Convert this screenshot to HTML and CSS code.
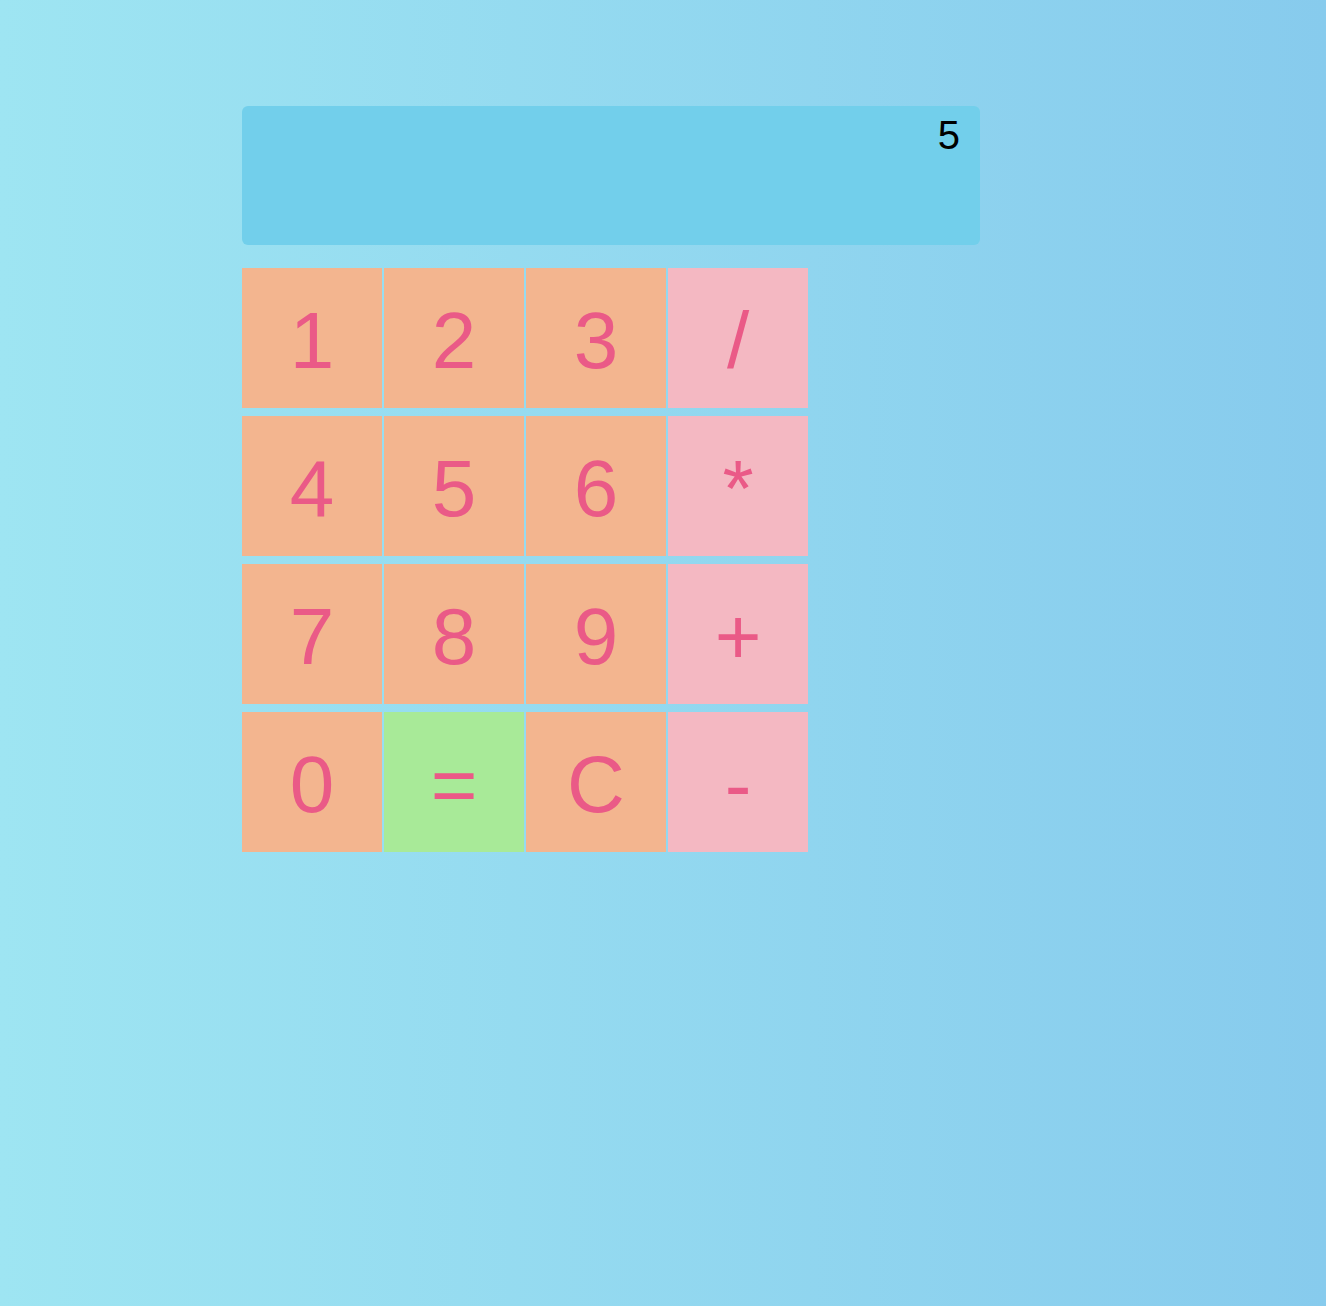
FILE: index.html
```html
<!DOCTYPE html>
<html>
<head>
<meta charset="utf-8">
<link rel="stylesheet" href="styles.css">
</head>
<body>
<div class="calc">
  <div class="display">5</div>
  <div class="keys">
    <button class="key num">1</button>
    <button class="key num">2</button>
    <button class="key num">3</button>
    <button class="key op">/</button>
    <button class="key num">4</button>
    <button class="key num">5</button>
    <button class="key num">6</button>
    <button class="key op star">*</button>
    <button class="key num">7</button>
    <button class="key num">8</button>
    <button class="key num">9</button>
    <button class="key op">+</button>
    <button class="key num">0</button>
    <button class="key eq">=</button>
    <button class="key num">C</button>
    <button class="key op">-</button>
  </div>
</div>
</body>
</html>
```
FILE: styles.css
```css
html, body {
  margin: 0;
  height: 100%;
}
body {
  background: linear-gradient(to right, #9ee5f2, #87cbed);
  font-family: "Liberation Sans", Arial, sans-serif;
}
.calc {
  padding: 106px 0 0 242px;
  width: 738px;
}
.display {
  height: 139px;
  background: #72cfeb;
  border-radius: 6px;
  text-align: right;
  box-sizing: border-box;
  padding: 9px 20px 0 0;
  font-size: 40px;
  line-height: 1;
  color: #000;
}
.keys {
  margin-top: 23px;
  display: grid;
  grid-template-columns: repeat(4, 140px);
  column-gap: 2px;
  row-gap: 8px;
}
.key {
  width: 140px;
  height: 140px;
  border: 0;
  margin: 0;
  padding: 6px 0 0 0;
  font-family: "Liberation Sans", Arial, sans-serif;
  font-size: 80px;
  line-height: 1;
  color: #ea5a87;
}
.num { background: #f3b58f; }
.op { background: #f4b8c2; }
.eq { background: #a8ea98; }
```
